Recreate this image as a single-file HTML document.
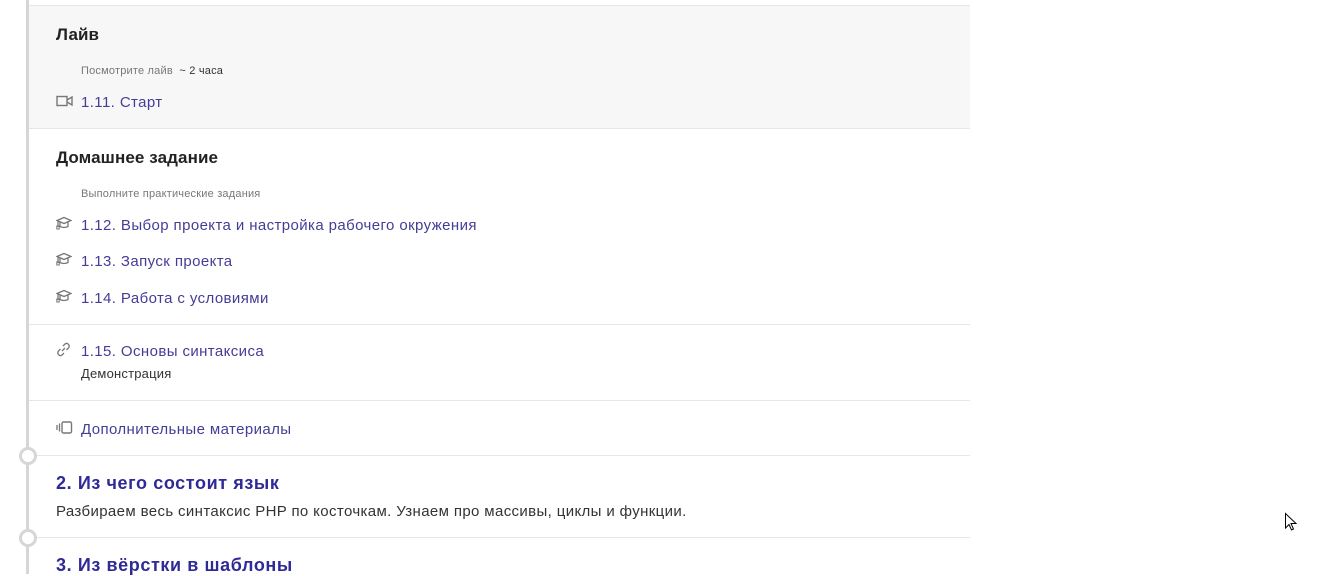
<!DOCTYPE html>
<html><head><meta charset="utf-8"><style>
html,body{margin:0;padding:0;width:1329px;height:574px;overflow:hidden;background:#fff;font-family:"Liberation Sans","DejaVu Sans",sans-serif;}
.a{position:absolute;white-space:nowrap}
.line{position:absolute;left:26px;top:0;width:3px;height:574px;background:#d6d6d6}
.sep{position:absolute;left:29px;width:941px;height:1px;background:#e6e6e6}
.h{font-size:17px;color:#222;font-weight:bold;letter-spacing:0.1px}
.sub{font-size:11px;color:#777;letter-spacing:0.2px}
.lk{font-size:15px;color:#443d96;letter-spacing:0.4px}
.ic{position:absolute}
.circ{position:absolute;left:19px;border:3px solid #d6d6d6;border-radius:50%;background:#fff;box-sizing:border-box;width:18px;height:18px}
.t{font-size:18px;font-weight:bold;color:#2f2a96;letter-spacing:0.6px}
</style></head><body>
<div class="line"></div>
<div class="a" style="left:29px;top:6px;width:941px;height:122px;background:#f7f7f7"></div>
<div class="sep" style="top:5px"></div>
<div class="sep" style="top:128px"></div>
<div class="sep" style="top:324px"></div>
<div class="sep" style="top:400px"></div>
<div class="sep" style="top:455px"></div>
<div class="sep" style="top:537px"></div>
<div class="circ" style="top:447px"></div>
<div class="circ" style="top:529px"></div>

<div class="a h" style="left:56px;top:25px">Лайв</div>
<div class="a sub" style="left:81px;top:65px">Посмотрите лайв &nbsp;<span style="color:#333">~ 2 часа</span></div>
<svg class="ic" style="left:56px;top:95px" width="18" height="12" viewBox="0 0 18 12"><rect x="1" y="1.5" width="10" height="9" fill="none" stroke="#777" stroke-width="1.4"/><path d="M11 5L16 2V10L11 7" fill="none" stroke="#777" stroke-width="1.4"/></svg>
<div class="a lk" style="left:81px;top:94px">1.11. Старт</div>

<div class="a h" style="left:56px;top:148px">Домашнее задание</div>
<div class="a sub" style="left:81px;top:188px">Выполните практические задания</div>

<svg class="ic" style="left:56px;top:216px" width="16" height="14" viewBox="0 0 16 14"><path d="M1 4.5L8 1.5L15 4.5L8 7.5Z M4 6V10.5Q8 12.5 12 10.5V6 M2 5V11" fill="none" stroke="#777" stroke-width="1.3"/><rect x="0.8" y="10" width="2.4" height="3" fill="none" stroke="#777" stroke-width="1"/></svg>
<div class="a lk" style="left:81px;top:217px">1.12. Выбор проекта и настройка рабочего окружения</div>
<svg class="ic" style="left:56px;top:252px" width="16" height="14" viewBox="0 0 16 14"><path d="M1 4.5L8 1.5L15 4.5L8 7.5Z M4 6V10.5Q8 12.5 12 10.5V6 M2 5V11" fill="none" stroke="#777" stroke-width="1.3"/><rect x="0.8" y="10" width="2.4" height="3" fill="none" stroke="#777" stroke-width="1"/></svg>
<div class="a lk" style="left:81px;top:253px">1.13. Запуск проекта</div>
<svg class="ic" style="left:56px;top:289px" width="16" height="14" viewBox="0 0 16 14"><path d="M1 4.5L8 1.5L15 4.5L8 7.5Z M4 6V10.5Q8 12.5 12 10.5V6 M2 5V11" fill="none" stroke="#777" stroke-width="1.3"/><rect x="0.8" y="10" width="2.4" height="3" fill="none" stroke="#777" stroke-width="1"/></svg>
<div class="a lk" style="left:81px;top:290px">1.14. Работа с условиями</div>

<svg class="ic" style="left:56px;top:342px" width="15" height="15" viewBox="0 0 15 15"><path d="M6 9L9 6 M7 4L9 2Q11 0.5 12.5 2.5Q14 4 12.5 6L10.5 8 M8 11L6 13Q4 14.5 2.5 12.5Q1 11 2.5 9L4.5 7" fill="none" stroke="#777" stroke-width="1.3"/></svg>
<div class="a lk" style="left:81px;top:343px">1.15. Основы синтаксиса</div>
<div class="a" style="left:81px;top:366px;font-size:13px;color:#333;letter-spacing:0.2px">Демонстрация</div>

<svg class="ic" style="left:56px;top:421px" width="17" height="13" viewBox="0 0 17 13"><path d="M1 4V9 M3.5 2.5V10.5" stroke="#777" stroke-width="1.3"/><rect x="6" y="1" width="9.5" height="11" rx="1.5" fill="none" stroke="#777" stroke-width="1.4"/></svg>
<div class="a lk" style="left:81px;top:421px">Дополнительные материалы</div>

<div class="a t" style="left:56px;top:473px">2. Из чего состоит язык</div>
<div class="a" style="left:56px;top:503px;font-size:15px;color:#333;letter-spacing:0.37px">Разбираем весь синтаксис PHP по косточкам. Узнаем про массивы, циклы и функции.</div>
<div class="a t" style="left:56px;top:555px">3. Из вёрстки в шаблоны</div>

<svg class="ic" style="left:1284px;top:512px" width="14" height="20" viewBox="0 0 14 20"><path d="M1.5 1.5V16L5 12.5L7.5 18L9.5 17L7 11.5H12Z" fill="#fff" stroke="#000" stroke-width="1"/></svg>
</body></html>
